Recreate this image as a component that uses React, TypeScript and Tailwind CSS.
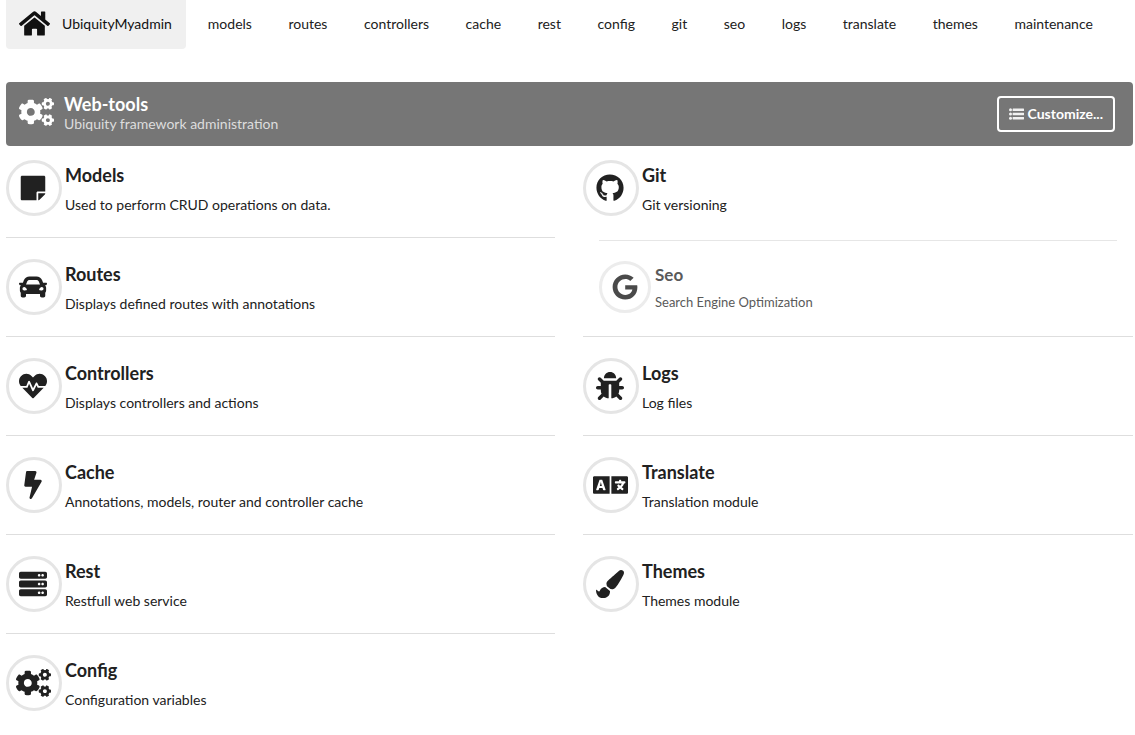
import type { IconType } from "react-icons";
import {
  FaBolt,
  FaBug,
  FaCar,
  FaCogs,
  FaGithub,
  FaGoogle,
  FaHeartbeat,
  FaHome,
  FaLanguage,
  FaPaintBrush,
  FaServer,
  FaStickyNote,
} from "react-icons/fa";

type Tool = {
  name: string;
  description: string;
  icon: IconType;
  iconClass: string;
  lifted?: boolean;
};

const menu = [
  "models",
  "routes",
  "controllers",
  "cache",
  "rest",
  "config",
  "git",
  "seo",
  "logs",
  "translate",
  "themes",
  "maintenance",
];

const leftTools: Tool[] = [
  { name: "Models", description: "Used to perform CRUD operations on data.", icon: FaStickyNote, iconClass: "size-7" },
  { name: "Routes", description: "Displays defined routes with annotations", icon: FaCar, iconClass: "size-7" },
  { name: "Controllers", description: "Displays controllers and actions", icon: FaHeartbeat, iconClass: "size-7" },
  { name: "Cache", description: "Annotations, models, router and controller cache", icon: FaBolt, iconClass: "size-7" },
  { name: "Rest", description: "Restfull web service", icon: FaServer, iconClass: "size-7" },
  { name: "Config", description: "Configuration variables", icon: FaCogs, iconClass: "h-7 w-[35px]" },
];

const rightTools: Tool[] = [
  { name: "Git", description: "Git versioning", icon: FaGithub, iconClass: "size-7" },
  { name: "Seo", description: "Search Engine Optimization", icon: FaGoogle, iconClass: "size-[26px]", lifted: true },
  { name: "Logs", description: "Log files", icon: FaBug, iconClass: "size-7" },
  { name: "Translate", description: "Translation module", icon: FaLanguage, iconClass: "h-7 w-[35px]" },
  { name: "Themes", description: "Themes module", icon: FaPaintBrush, iconClass: "size-7" },
];

function ListIcon() {
  return (
    <svg viewBox="0 0 15 12" className="h-3 w-[15px] opacity-90" fill="currentColor" aria-hidden="true">
      <circle cx="1.5" cy="1.8" r="1.5" />
      <circle cx="1.5" cy="6" r="1.5" />
      <circle cx="1.5" cy="10.2" r="1.5" />
      <rect x="3.6" y="0.5" width="11.4" height="2.6" rx="0.4" />
      <rect x="3.6" y="4.7" width="11.4" height="2.6" rx="0.4" />
      <rect x="3.6" y="8.9" width="11.4" height="2.6" rx="0.4" />
    </svg>
  );
}

function ToolRow({ tool }: { tool: Tool }) {
  const Icon = tool.icon;
  if (tool.lifted) {
    return (
      <li className="border-t border-transparent px-4 pt-[2px] pb-[23px]">
        <a href={"#" + tool.name} className="flex gap-1 border-t border-[#e6e6e6] pt-5 text-[#5a5a5a]">
          <span className="flex size-[52px] shrink-0 items-center justify-center rounded-full border-3 border-[#ececec] text-[#4a4a4a]">
            <Icon className={tool.iconClass} />
          </span>
          <span className="flex flex-col gap-[7px] pt-[2px]">
            <span className="text-[17px] leading-6 font-bold">{tool.name}</span>
            <span className="text-[13px] leading-4">{tool.description}</span>
          </span>
        </a>
      </li>
    );
  }
  return (
    <li className="border-t border-[#dedede] py-[21px] first:border-t-0 first:pt-0 last:pb-0">
      <a href={"#" + tool.name} className="flex gap-[3px]">
        <span className="flex size-14 shrink-0 items-center justify-center rounded-full border-3 border-[#e5e5e5] pr-[2px] pb-px">
          <Icon className={tool.iconClass} />
        </span>
        <span className="flex flex-col gap-2 pt-[3px]">
          <span className="text-[18px] leading-6 font-bold">{tool.name}</span>
          <span className="text-[14px] leading-5">{tool.description}</span>
        </span>
      </a>
    </li>
  );
}

export default function App() {
  return (
    <div className="min-h-screen bg-white pr-[2px] pl-[6px] font-[Lato,sans-serif] text-[14px] text-[#212121]">
      <nav className="flex h-[49px] items-stretch">
        <a href="#home" className="flex items-center gap-3 rounded-b bg-[#f0f0f0] pr-[14px] pb-[2px] pl-[13px] text-[#111111]">
          <FaHome className="size-[31px]" />
          UbiquityMyadmin
        </a>
        <div className="flex flex-1 items-stretch justify-between pr-[22px] pl-1">
          {menu.map((entry) => (
            <a key={entry} href={"#" + entry} className="flex items-center px-[18px] pb-[2px]">
              {entry}
            </a>
          ))}
        </div>
      </nav>

      <header className="mt-[33px] flex h-16 items-center justify-between rounded bg-[#767676] pr-[18px] pl-[13px] text-white">
        <div className="flex items-start gap-[10px]">
          <FaCogs className="mt-1 h-7 w-[35px]" />
          <div>
            <h1 className="text-[18px] leading-5 font-bold">Web-tools</h1>
            <p className="text-[14px] leading-5 text-[#dddddd]">Ubiquity framework administration</p>
          </div>
        </div>
        <button type="button" className="flex h-9 items-center gap-1 rounded border-2 border-white px-[10px] pb-px font-bold">
          <ListIcon />
          Customize...
        </button>
      </header>

      <main className="mt-[14px] grid grid-cols-[549fr_550fr] items-start gap-7">
        <ul>
          {leftTools.map((tool) => (
            <ToolRow key={tool.name} tool={tool} />
          ))}
        </ul>
        <ul>
          {rightTools.map((tool) => (
            <ToolRow key={tool.name} tool={tool} />
          ))}
        </ul>
      </main>
    </div>
  );
}
